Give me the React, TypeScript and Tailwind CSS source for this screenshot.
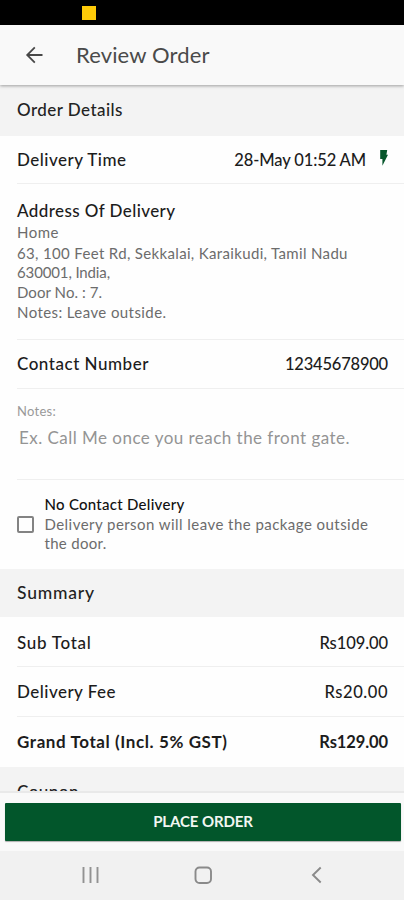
import type { ReactNode } from "react";

function SectionHeader({ children, className }: { children: ReactNode; className: string }) {
  return (
    <h2 className={`shrink-0 bg-[#f3f3f3] pl-[17px] font-medium text-[#222] ${className}`}>
      {children}
    </h2>
  );
}

function Row({ label, value, className }: { label: ReactNode; value: ReactNode; className: string }) {
  return (
    <div className={`ml-[17px] flex shrink-0 items-start justify-between pr-4 text-[17px] text-[#1c1c1c] ${className}`}>
      {label}
      {value}
    </div>
  );
}

function BoltIcon() {
  return (
    <svg className="mt-[14px] h-4 w-2" viewBox="0 0 8 16" fill="#07562c">
      <path d="M0.2 0H7.2L6.4 4.8H8L2.4 15.8V9H0.2Z" />
    </svg>
  );
}

export default function App() {
  return (
    <div className="flex h-[900px] w-[404px] flex-col overflow-hidden bg-[#fefefe] font-['Lato','Noto_Sans',sans-serif]">
      <div className="flex h-[25px] shrink-0 bg-black pt-[6px] pl-[82px]">
        <div className="h-[14px] w-[14px] bg-[#fecb08]" />
      </div>

      <header className="relative z-10 flex h-[60px] shrink-0 items-start bg-[#f9f9f9] shadow-[0_1px_3px_rgba(0,0,0,0.35)]">
        <svg className="mt-[21px] ml-[25px] h-[18px] w-[18px]" viewBox="0 0 18 18" fill="none" stroke="#484848" strokeWidth="1.8">
          <path d="M17.5 9H2.2M9.8 1.4L2.2 9L9.8 16.6" />
        </svg>
        <h1 className="ml-[33px] text-[22px] leading-[60px] tracking-[0.13px] text-[#4a4a4a]">Review Order</h1>
      </header>

      <main className="flex h-[706px] shrink-0 flex-col overflow-hidden">
        <SectionHeader className="h-[51px] text-[17px] leading-[49px] tracking-[0.45px]">Order Details</SectionHeader>

        <Row
          className="h-[48px] border-b border-[#efefef] leading-[47px] font-medium"
          label={<span className="tracking-[0.48px]">Delivery Time</span>}
          value={
            <div className="flex items-start gap-[14px]">
              <span className="text-[16.5px] leading-[49px] tracking-[-0.12px]">28-May 01:52 AM</span>
              <BoltIcon />
            </div>
          }
        />

        <section className="ml-[17px] h-[156px] shrink-0 border-b border-[#efefef] pt-[16px] text-[15px] text-[#6c6c6c]">
          <h3 className="h-[22px] text-[17px] leading-[22px] font-medium tracking-[0.41px] text-[#1c1c1c]">Address Of Delivery</h3>
          <p className="h-[21px] leading-[20px] tracking-[0.5px]">Home</p>
          <p className="h-[20px] leading-[20px] tracking-[0.34px] whitespace-nowrap">63, 100 Feet Rd, Sekkalai, Karaikudi, Tamil Nadu</p>
          <p className="h-[20px] leading-[18px] tracking-[-0.13px]">630001, India,</p>
          <p className="h-[20px] leading-[19px] tracking-[0.06px]">Door No. : 7.</p>
          <p className="h-[20px] leading-[19px] tracking-[0.41px]">Notes: Leave outside.</p>
        </section>

        <Row
          className="h-[49px] border-b border-[#efefef] leading-[48px] font-medium"
          label={<span className="tracking-[0.52px]">Contact Number</span>}
          value={<span className="text-[16.5px] leading-[49px] tracking-[-0.2px]">12345678900</span>}
        />

        <section className="ml-[17px] h-[91px] shrink-0 border-b border-[#efefef] pt-[13px]">
          <p className="h-[18px] text-[13px] leading-[18px] tracking-[0.27px] text-[#999]">Notes:</p>
          <p className="mt-[8px] ml-[2px] h-[20px] text-[17px] leading-[20px] tracking-[0.47px] whitespace-nowrap text-[#949494]">
            Ex. Call Me once you reach the front gate.
          </p>
        </section>

        <section className="flex h-[89px] shrink-0 pt-[14px] pl-[17px]">
          <div className="mt-[22px] h-[17px] w-[17px] shrink-0 rounded-[2px] border-2 border-[#838383]" />
          <div className="ml-[10.5px] text-[15px] text-[#6c6c6c]">
            <h3 className="h-[20px] leading-[20px] font-medium tracking-[0.27px] text-[#111]">No Contact Delivery</h3>
            <p className="h-[19px] leading-[20px] tracking-[0.45px] whitespace-nowrap">Delivery person will leave the package outside</p>
            <p className="h-[20px] leading-[20px] tracking-[0.3px]">the door.</p>
          </div>
        </section>

        <SectionHeader className="h-[48px] text-[17.5px] leading-[47px] tracking-[0.8px]">Summary</SectionHeader>

        <Row
          className="h-[50px] border-b border-[#efefef] leading-[51px] font-medium"
          label={<span className="tracking-[0.7px]">Sub Total</span>}
          value={<span className="text-[16.5px] leading-[52px] tracking-[-0.07px]">Rs109.00</span>}
        />
        <Row
          className="h-[50px] border-b border-[#efefef] leading-[50px] font-medium"
          label={<span className="tracking-[0.47px]">Delivery Fee</span>}
          value={<span className="text-[16.5px] leading-[51px] tracking-[0.55px]">Rs20.00</span>}
        />
        <Row
          className="h-[50px] leading-[50px] font-bold"
          label={<span className="tracking-[0.59px]">Grand Total (Incl. 5% GST)</span>}
          value={<span className="text-[16.5px] leading-[51px] tracking-[-0.1px]">Rs129.00</span>}
        />
        <SectionHeader className="h-[50px] text-[17px] leading-[49px] tracking-[0.48px]">Coupon</SectionHeader>
      </main>

      <footer className="z-10 flex h-[60px] shrink-0 flex-col border-t-2 border-[#e9e9e9] bg-[#f9f9f9] pt-[9.5px] pr-[3px] pl-[5px]">
        <button className="h-[38px] w-full rounded-[1px] bg-[#02562b] text-center text-[15px] leading-[37px] font-bold tracking-[-0.1px] text-[#f2f7f2] shadow-[0_1px_1px_rgba(0,0,0,0.3)]">
          PLACE ORDER
        </button>
      </footer>

      <nav className="flex h-[49px] shrink-0 items-start bg-[#f1f1f1] pt-[15px]">
        <svg className="ml-[82px] h-[18px] w-[17px]" viewBox="0 0 17 18" stroke="#929292" strokeWidth="1.9">
          <path d="M1.5 1V17M8.5 1V17M15.5 1V17" />
        </svg>
        <svg className="ml-[95px] h-[18px] w-[18px]" viewBox="0 0 18 18" fill="none" stroke="#8a8a8a" strokeWidth="1.9">
          <rect x="1.5" y="1.5" width="15.5" height="15.5" rx="4" />
        </svg>
        <svg className="ml-[99px] h-[18px] w-[11px]" viewBox="0 0 11 18" fill="none" stroke="#8a8a8a" strokeWidth="1.9">
          <path d="M9.7 1.5L2 9L9.7 16.5" />
        </svg>
      </nav>
    </div>
  );
}
